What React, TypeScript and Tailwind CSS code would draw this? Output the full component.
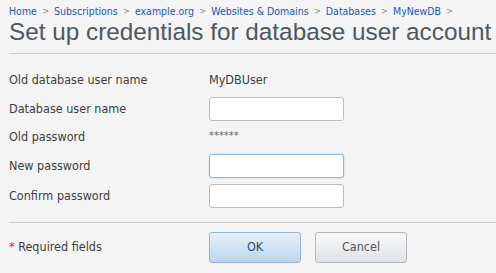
const crumbs = ["Home", "Subscriptions", "example.org", "Websites & Domains", "Databases", "MyNewDB"];

function Sep() {
  return <span className="text-[#8a8a8a] text-[9.5px] mx-[5px]">&gt;</span>;
}

function Row({ label, children, h }: { label: string; children?: React.ReactNode; h: string }) {
  return (
    <div className={`flex items-center ${h}`}>
      <div className="w-[200px] shrink-0">{label}</div>
      <div className="flex items-center">{children}</div>
    </div>
  );
}

function Input({ focused }: { focused?: boolean }) {
  return (
    <input
      type="text"
      className={
        focused
          ? "w-[135px] h-[24px] rounded-[3px] bg-white border border-[#8fb7d9] shadow-[0_0_2px_rgba(90,150,210,0.45)] outline-none"
          : "w-[135px] h-[24px] rounded-[3px] bg-white border border-[#bdbdbd] outline-none"
      }
    />
  );
}

export default function App() {
  return (
    <div
      className="bg-[#f4f4f4] w-[496px] h-[273px] overflow-hidden pl-[9px] text-[#3d3d3d]"
      style={{ fontFamily: '"DejaVu Sans Condensed", "DejaVu Sans", sans-serif' }}
    >
      <div className="pt-[3px] h-[18px] flex items-center text-[10.5px] leading-[14px] whitespace-nowrap">
        {crumbs.map((c) => (
          <span key={c} className="flex items-center">
            <span className="text-[#1a56b8]">{c}</span>
            <Sep />
          </span>
        ))}
      </div>
      <h1
        className="text-[24.3px] leading-[28px] text-[#4d5763] whitespace-nowrap"
        style={{ fontFamily: '"Liberation Sans", Arial, sans-serif' }}
      >
        Set up credentials for database user account
      </h1>
      <div className="mt-[7px] border-t border-[#cacaca]" />
      <div className="mt-[16px] flex flex-col gap-[6px] text-[12.5px]">
        <Row label="Old database user name" h="h-[21px]">
          <span>MyDBUser</span>
        </Row>
        <Row label="Database user name" h="h-[24px]">
          <Input />
        </Row>
        <Row label="Old password" h="h-[21px]">
          <span className="text-[11px] text-[#666] -mt-[3px]">******</span>
        </Row>
        <Row label="New password" h="h-[24px]">
          <Input focused />
        </Row>
        <Row label="Confirm password" h="h-[24px]">
          <Input />
        </Row>
      </div>
      <div className="mt-[14px] border-t border-[#cacaca]" />
      <div className="mt-[9px] flex items-center h-[31px] text-[12.5px]">
        <div className="w-[200px] shrink-0">
          <span className="text-[#d3262c]">*</span> Required fields
        </div>
        <button className="w-[92px] h-[31px] rounded-[3px] border border-[#93b6d8] bg-gradient-to-b from-[#e6f0f9] to-[#bcd5ec] text-[#2e4660] text-[12.5px]">
          OK
        </button>
        <button className="ml-[14px] w-[92px] h-[31px] rounded-[3px] border border-[#b3b8bd] bg-gradient-to-b from-[#f8f9fa] to-[#dfe3e7] text-[#555] text-[12.5px]">
          Cancel
        </button>
      </div>
    </div>
  );
}
